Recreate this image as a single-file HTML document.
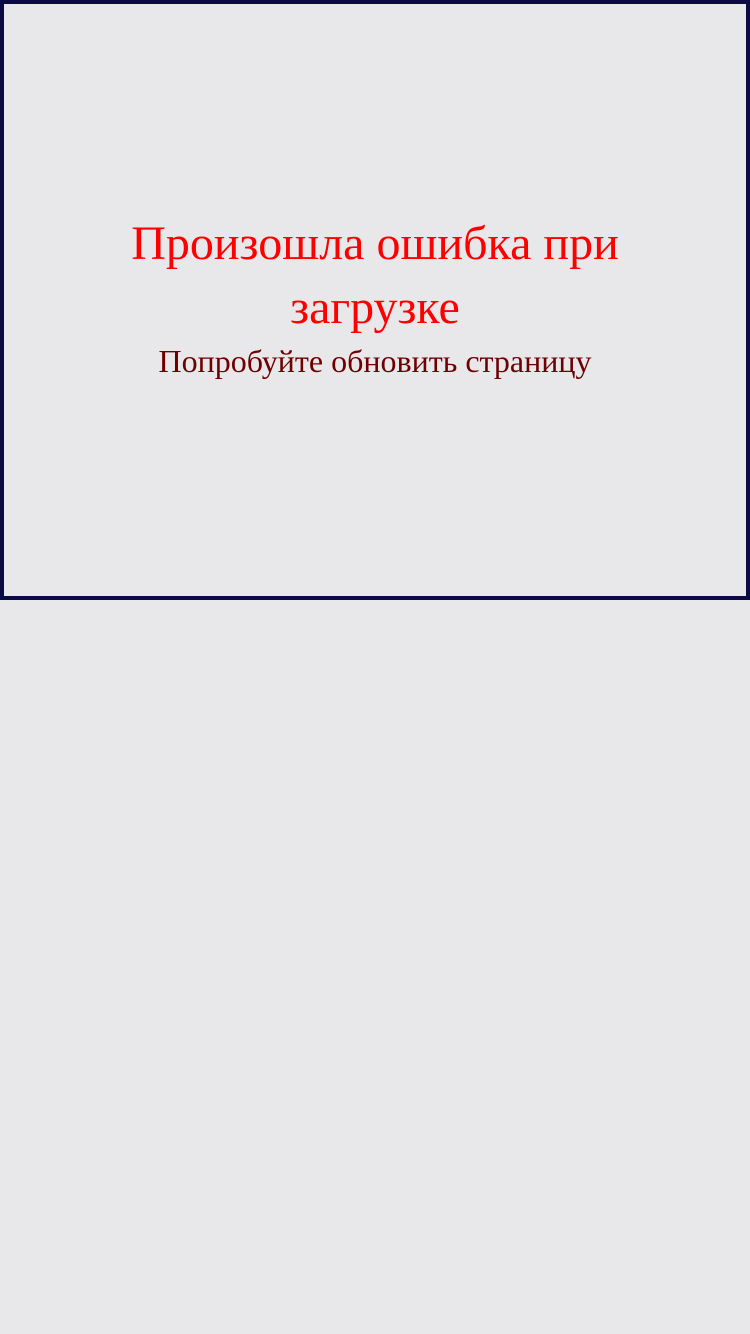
<!DOCTYPE html>
<html><head><meta charset="utf-8"><style>
html,body{margin:0;padding:0;background:#e8e7e9;width:750px;height:1334px;overflow:hidden}
.box{position:absolute;left:0;top:0;width:742px;height:592px;border:4px solid #0b0a45;background:#e8e7e9}
.t{position:absolute;left:0;width:742px;text-align:center;font-family:"Liberation Serif",serif;color:#ff0000;font-size:48px;line-height:64px;top:208px;margin:0;font-weight:normal}
.s{position:absolute;left:0;width:742px;text-align:center;font-family:"Liberation Serif",serif;color:#6e0000;font-size:32px;line-height:40px;top:337px;margin:0}
</style></head><body>
<div class="box">
<h1 class="t">Произошла ошибка при<br>загрузке</h1>
<p class="s">Попробуйте обновить страницу</p>
</div>
</body></html>
